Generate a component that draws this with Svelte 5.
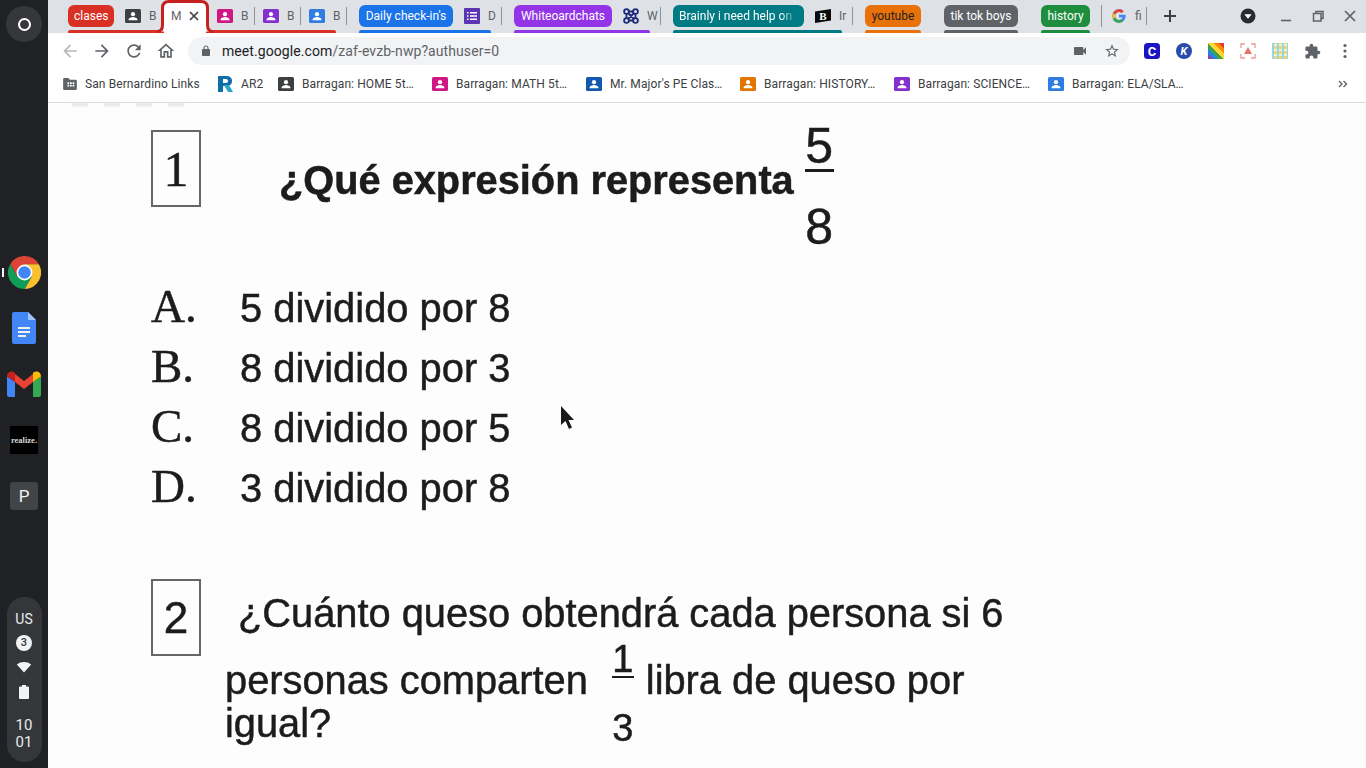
<script>
  const groups = [
    {
      color: '#d93025', label: 'clases', w: 46, end: 11,
      tabs: [
        { icon: '#3c4043', t: 'B', w: 47, pad: 11, plain: true },
        { active: true, t: 'M', w: 48 },
        { icon: '#d01884', t: 'B', w: 46, sep: true },
        { icon: '#8430ce', t: 'B', w: 46, sep: true },
        { icon: '#2f7de1', t: 'B', w: 46, sep: true }
      ]
    },
    { color: '#1a73e8', label: "Daily check-in's", w: 94, end: 11, tabs: [{ kind: 'list', t: 'D', w: 49, pad: 11, sep: true }] },
    { color: '#9334e6', label: 'Whiteoardchats', w: 98, end: 11, tabs: [{ kind: 'knot', t: 'W', w: 49, pad: 11, sep: true }] },
    { color: '#007b83', label: 'Brainly i need help on', w: 131, end: 11, fade: true, tabs: [{ kind: 'flag', t: 'Ir', w: 49, pad: 11, sep: true }] },
    { color: '#e8710a', label: 'youtube', w: 56, dark: true, tabs: [] },
    { color: '#5f6368', label: 'tik tok boys', w: 74, tabs: [] },
    { color: '#1e8e3e', label: 'history', w: 49, tabs: [] }
  ];

  const marks = [
    { color: '#3c4043', label: 'Barragan: HOME 5t…', w: 154 },
    { color: '#d01884', label: 'Barragan: MATH 5t…', w: 154 },
    { color: '#1558b0', label: "Mr. Major's PE Clas…", w: 154 },
    { color: '#e37400', label: 'Barragan: HISTORY…', w: 154 },
    { color: '#8430ce', label: 'Barragan: SCIENCE…', w: 154 },
    { color: '#2f7de1', label: 'Barragan: ELA/SLA…', w: 154 }
  ];

  const options = [
    ['A.', '5 dividido por 8'],
    ['B.', '8 dividido por 3'],
    ['C.', '8 dividido por 5'],
    ['D.', '3 dividido por 8']
  ];
</script>

{#snippet classroom(color)}
  <svg class="tabicon" viewBox="0 0 16 14" width="16" height="14">
    <rect width="16" height="14" rx="1.5" fill={color} />
    <circle cx="8" cy="5.2" r="2.1" fill="#fff" />
    <path d="M3.6 10.6c0-1.8 2.9-2.7 4.4-2.7s4.4.9 4.4 2.7v.6H3.6z" fill="#fff" />
  </svg>
{/snippet}

{#snippet glyph(d, size, fill)}
  <svg viewBox="0 0 24 24" width={size} height={size}><path {d} {fill} /></svg>
{/snippet}

<div class="screen">
  <aside class="shelf">
    <div class="launcher"><span class="ring"></span></div>
    <div class="apps">
      <div class="app">
        <span class="running"></span>
        <svg viewBox="0 0 48 48" width="33" height="33">
          <path d="M24 12H44.8A24 24 0 0 0 3.2 12L13.6 30 24 24Z" fill="#db4437" />
          <path d="M34.4 30 24 48A24 24 0 0 0 44.8 12H24Z" fill="#fbc02d" />
          <path d="M13.6 30 3.2 12A24 24 0 0 0 24 48L34.4 30 24 24Z" fill="#0f9d58" />
          <circle cx="24" cy="24" r="11.5" fill="#fff" />
          <circle cx="24" cy="24" r="9" fill="#4285f4" />
        </svg>
      </div>
      <div class="app">
        <svg viewBox="0 0 24 32" width="24" height="32">
          <path d="M2 0H16L24 8V30a2 2 0 0 1-2 2H2a2 2 0 0 1-2-2V2a2 2 0 0 1 2-2z" fill="#4285f4" />
          <path d="M16 0L24 8H16z" fill="#a1c2fa" />
          <path d="M6 15H18V17H6zM6 19H18V21H6zM6 23H14V25H6z" fill="#f1f1f1" />
        </svg>
      </div>
      <div class="app">
        <svg viewBox="0 0 34 26" width="34" height="26">
          <path d="M0 5.5V24a2 2 0 0 0 2 2H8V11z" fill="#4285f4" />
          <path d="M34 5.5V24a2 2 0 0 1-2 2H26V11z" fill="#34a853" />
          <path d="M8 3 17 10 26 3V11L17 18 8 11z" fill="#ea4335" />
          <path d="M0 5.5C0 1 4.600-1 8 1.700V11z" fill="#c5221f" />
          <path d="M34 5.500C34 1 29.400-1 26 1.700V11z" fill="#fbbc04" />
        </svg>
      </div>
      <div class="app"><span class="realize">realize.</span></div>
      <div class="app"><span class="pee">P</span></div>
    </div>
    <div class="tray">
      <span class="us">US</span>
      <span class="badge">3</span>
      <svg viewBox="0 0 16 14" width="16" height="14"><path d="M8 12.500 0.800 4.500C4.800 1.200 11.200 1.200 15.200 4.500z" fill="#f1f3f4" /></svg>
      <svg class="batt" viewBox="0 0 10 14" width="10" height="14"><path d="M3 0H7V1.500H9a1 1 0 0 1 1 1V13a1 1 0 0 1-1 1H1a1 1 0 0 1-1-1V2.500a1 1 0 0 1 1-1H3z" fill="#f1f3f4" /></svg>
      <span class="clock">10<br />01</span>
    </div>
  </aside>

  <main class="browser">
    <div class="strip">
      {#each groups as g}
        <div class="group">
          <div class="row">
            <span class="chip" class:dark={g.dark} class:fade={g.fade} style="width:{g.w}px;background:{g.color}"><span>{g.label}</span></span>
            {#each g.tabs as tab}
              {#if tab.active}
                <div class="tab active" style="width:{tab.w}px">
                  <svg class="outline" viewBox="0 0 56 33" width="56" height="33">
                    <rect x="7" y="20" width="42" height="13" fill="#fff" />
                    <path d="M0 31.500H0Q5.500 31.500 5.500 25V8Q5.500 1.500 12 1.500H44Q50.500 1.500 50.500 8V25Q50.500 31.500 56 31.500" fill="#fff" stroke="#c5221f" stroke-width="3" />
                  </svg>
                  <span class="letter">{tab.t}</span>
                  <svg class="close" viewBox="0 0 10 10" width="10" height="10"><path d="M1 1 9 9M9 1 1 9" stroke="#3c4043" stroke-width="1.700" /></svg>
                </div>
              {:else}
                <div class="tab" class:sep={tab.sep} style="width:{tab.w}px;padding-left:{tab.pad ?? 8}px">
                  {#if tab.icon}
                    {@render classroom(tab.icon)}
                  {:else if tab.kind === 'list'}
                    <svg class="tabicon" viewBox="0 0 16 16" width="16" height="16">
                      <rect width="16" height="16" rx="1" fill="#5e35b1" />
                      <path d="M3 4H4.500V5.500H3zM6 4H13V5.500H6zM3 7.300H4.500V8.800H3zM6 7.300H13V8.800H6zM3 10.600H4.500V12.100H3zM6 10.600H13V12.100H6z" fill="#fff" />
                    </svg>
                  {:else if tab.kind === 'knot'}
                    <svg class="tabicon" viewBox="0 0 16 16" width="16" height="16" fill="none" stroke="#1c2a7a" stroke-width="1.800">
                      <circle cx="3.500" cy="3.500" r="2.400" />
                      <circle cx="12.500" cy="3.500" r="2.400" />
                      <circle cx="3.500" cy="12.500" r="2.400" />
                      <circle cx="12.500" cy="12.500" r="2.400" />
                      <path d="M5 5 11 11M11 5 5 11M5.800 3.500H10.200M5.800 12.500H10.200M3.500 5.800V10.200M12.500 5.800V10.200" />
                    </svg>
                  {:else}
                    <svg class="tabicon" viewBox="0 0 16 16" width="16" height="16">
                      <path d="M0 3.500 16 1V12.500L0 15z" fill="#0a0a0a" />
                      <text x="8" y="11.800" text-anchor="middle" class="flagb">B</text>
                    </svg>
                  {/if}
                  <span class="letter">{tab.t}</span>
                </div>
              {/if}
            {/each}
          </div>
          <div class="line" style="background:{g.color};margin-right:{g.end ?? 0}px"></div>
        </div>
      {/each}

      <div class="tab sep lone" style="width:46px;padding-left:9px">
        <svg class="tabicon" viewBox="0 0 48 48" width="16" height="16">
          <path d="M43.600 20H24v8.500h11.300C33.700 33.200 29.300 36 24 36c-6.600 0-12-5.400-12-12s5.400-12 12-12c3 0 5.800 1.100 7.900 3l6-6C34.300 5.700 29.400 4 24 4 13 4 4 13 4 24s9 20 20 20 20-9 20-20c0-1.300-.1-2.700-.4-4z" fill="#4285f4" />
          <path d="M6.300 14.700l7 5.100C15.200 15.100 19.300 12 24 12c3 0 5.800 1.100 7.900 3l6-6C34.300 5.700 29.400 4 24 4 16.300 4 9.700 8.300 6.300 14.700z" fill="#ea4335" />
          <path d="M24 44c5.300 0 10.100-1.700 13.700-5l-6.500-5.300C29.200 35.200 26.700 36 24 36c-5.200 0-9.700-3.300-11.300-8l-7 5.400C9.100 39.700 16 44 24 44z" fill="#34a853" />
          <path d="M5.700 33.400l7-5.400c-.4-1.300-.7-2.600-.7-4s.3-2.900.7-4.200l-7-5.100C4.600 17.300 4 20.600 4 24s.6 6.600 1.700 9.400z" fill="#fbbc04" />
        </svg>
        <span class="letter">fi</span>
      </div>

      <button class="plus" aria-label="New tab">
        <svg viewBox="0 0 14 14" width="14" height="14"><path d="M7 1V13M1 7H13" stroke="#3c4043" stroke-width="2" /></svg>
      </button>

      <div class="winctl">
        <svg class="down" viewBox="0 0 16 16" width="16" height="16">
          <circle cx="8" cy="8" r="7.500" fill="#2b2c2f" />
          <path d="M4.300 6.300H11.700L8 10.700z" fill="#fff" />
        </svg>
        <svg viewBox="0 0 32 16" width="32" height="16"><path d="M11 12.500H21" stroke="#5f6368" stroke-width="1.600" /></svg>
        <svg viewBox="0 0 32 16" width="32" height="16" fill="none" stroke="#5f6368" stroke-width="1.500"><path d="M14 5V3.500H21V10.500H19" /><rect x="11.500" y="5.500" width="7.500" height="7.500" /></svg>
        <svg viewBox="0 0 32 16" width="32" height="16"><path d="M11 3 21 13M21 3 11 13" stroke="#5f6368" stroke-width="1.700" /></svg>
      </div>
    </div>

    <div class="toolbar">
      <span class="btn">{@render glyph('M20 11H7.830l5.590-5.590L12 4l-8 8 8 8 1.410-1.410L7.830 13H20v-2z', 20, '#b4b7bb')}</span>
      <span class="btn">{@render glyph('M12 4l-1.410 1.410L16.170 11H4v2h12.170l-5.580 5.590L12 20l8-8z', 20, '#5f6368')}</span>
      <span class="btn">{@render glyph('M17.650 6.350C16.200 4.900 14.210 4 12 4c-4.420 0-7.990 3.580-7.990 8s3.570 8 7.990 8c3.730 0 6.840-2.550 7.730-6h-2.080c-.82 2.330-3.040 4-5.650 4-3.310 0-6-2.690-6-6s2.690-6 6-6c1.660 0 3.140.69 4.220 1.780L13 11h7V4l-2.350 2.350z', 20, '#5f6368')}</span>
      <span class="btn">{@render glyph('M12 5.690l5 4.500V18h-2v-6H9v6H7v-7.810l5-4.500M12 3L2 12h3v8h6v-6h2v6h6v-8h3L12 3z', 20, '#5f6368')}</span>

      <div class="omni">
        <span class="lock">{@render glyph('M18 8h-1V6c0-2.760-2.240-5-5-5S7 3.240 7 6v2H6c-1.100 0-2 .9-2 2v10c0 1.100.9 2 2 2h12c1.100 0 2-.9 2-2V10c0-1.100-.9-2-2-2zM9 6c0-1.660 1.340-3 3-3s3 1.340 3 3v2H9V6z', 12, '#5f6368')}</span>
        <span class="url"><b>meet.google.com</b>/zaf-evzb-nwp?authuser=0</span>
        <span class="btn pushed">{@render glyph('M17 10.500V7c0-.55-.45-1-1-1H4c-.55 0-1 .45-1 1v10c0 .55.45 1 1 1h12c.55 0 1-.45 1-1v-3.500l4 4v-11l-4 4z', 16, '#5f6368')}</span>
        <span class="btn">{@render glyph('M22 9.240l-7.190-.62L12 2 9.190 8.630 2 9.240l5.460 4.730L5.820 21 12 17.270 18.180 21l-1.630-7.030L22 9.240zM12 15.400l-3.760 2.270 1-4.280-3.320-2.880 4.380-.38L12 6.100l1.710 4.040 4.380.38-3.320 2.880 1 4.280L12 15.400z', 16, '#5f6368')}</span>
      </div>

      <span class="btn">
        <svg viewBox="0 0 16 16" width="16" height="16">
          <rect width="16" height="16" rx="3.500" fill="#1c14c4" />
          <text x="8" y="12.500" text-anchor="middle" class="extc">C</text>
        </svg>
      </span>
      <span class="btn">
        <svg viewBox="0 0 16 16" width="16" height="16">
          <circle cx="8" cy="8" r="8" fill="#2c4aa8" />
          <text x="8" y="12" text-anchor="middle" class="extk">K</text>
        </svg>
      </span>
      <span class="btn"><span class="rainbow"></span></span>
      <span class="btn">
        <svg viewBox="0 0 16 16" width="16" height="16" fill="none" stroke="#eb9a92" stroke-width="1.300">
          <path d="M1 5V1H5M11 1H15V5M15 11V15H11M5 15H1V11" />
          <path d="M8 4 12 11H4z" fill="#e57368" stroke="none" />
        </svg>
      </span>
      <span class="btn"><span class="quilt"></span></span>
      <span class="btn">{@render glyph('M20.500 11H19V7c0-1.100-.9-2-2-2h-4V3.500C13 2.120 11.880 1 10.500 1S8 2.120 8 3.500V5H4c-1.100 0-1.990.9-1.990 2v3.800H3.500c1.490 0 2.700 1.210 2.700 2.700s-1.210 2.700-2.700 2.700H2V20c0 1.100.9 2 2 2h3.800v-1.500c0-1.490 1.210-2.700 2.700-2.700 1.490 0 2.700 1.210 2.700 2.700V22H17c1.100 0 2-.9 2-2v-4h1.500c1.380 0 2.500-1.120 2.500-2.500S21.880 11 20.500 11z', 17, '#5f6368')}</span>
      <span class="btn last">
        <svg viewBox="0 0 4 16" width="4" height="16"><circle cx="2" cy="2.500" r="1.600" fill="#5f6368" /><circle cx="2" cy="8" r="1.600" fill="#5f6368" /><circle cx="2" cy="13.500" r="1.600" fill="#5f6368" /></svg>
      </span>
    </div>

    <div class="bookmarks">
      <div class="mark" style="width:154px">
        <svg viewBox="0 0 16 14" width="14" height="12"><path d="M0 1.500A1.500 1.500 0 0 1 1.500 0H6L8 2H14.500A1.500 1.500 0 0 1 16 3.500V12.500A1.500 1.500 0 0 1 14.500 14H1.500A1.500 1.500 0 0 1 0 12.500z" fill="#5f6368" /><path d="M5 5H7V7H5zM8 5H10V7H8zM11 5H13V7H11zM5 8H7V10H5zM8 8H10V10H8zM11 8H13V10H11z" fill="#fff" /></svg>
        <span class="blabel">San Bernardino Links</span>
      </div>
      <div class="mark" style="width:61px">
        <svg viewBox="0 0 16 16" width="16" height="16">
          <path d="M1 0H9C13 0 15 2 15 5S13 10 9 10H6V16H1z" fill="#0f6ea8" />
          <path d="M6 3H9C10.500 3 11 4 11 5S10.500 7 9 7H6z" fill="#fff" />
          <path d="M7 9H12L16 16H11z" fill="#2aa7c9" />
        </svg>
        <span class="blabel">AR2</span>
      </div>
      {#each marks as m}
        <div class="mark" style="width:{m.w}px">
          {@render classroom(m.color)}
          <span class="blabel">{m.label}</span>
        </div>
      {/each}
      <svg class="more" viewBox="0 0 10 8" width="10" height="8"><path d="M1 1 4 4 1 7M5.500 1 8.500 4 5.500 7" fill="none" stroke="#5f6368" stroke-width="1.400" /></svg>
    </div>

    <div class="page">
      <div class="smudges"><i></i><i></i><i></i><i></i></div>
      <div class="sheet">
        <div class="q1">
          <div class="box serif">1</div>
          <p class="title">¿Qué expresión representa</p>
          <div class="frac big">
            <span class="num">5</span>
            <span class="den">8</span>
          </div>
        </div>

        <ul class="options">
          {#each options as [letter, text]}
            <li><span class="opt">{letter}</span><span class="txt">{text}</span></li>
          {/each}
        </ul>

        <div class="q2">
          <div class="box sans">2</div>
          <div class="body">
            <p class="first">¿Cuánto queso obtendrá cada persona si 6</p>
            <div class="rest">
              <div class="stack">
                <p>personas comparten</p>
                <p class="igual">igual?</p>
              </div>
              <div class="frac small">
                <span class="num">1</span>
                <span class="den">3</span>
              </div>
              <p class="tail">libra de queso por</p>
            </div>
          </div>
        </div>
      </div>

      <svg class="cursor" viewBox="0 0 16 26" width="16" height="26">
        <path d="M1 0V19L5.500 15 9 23 12 21.500 8.500 14H14z" fill="#1a1a1a" />
      </svg>
    </div>
  </main>
</div>

<style>
  :global(body) {
    margin: 0;
    overflow: hidden;
  }

  .screen {
    display: flex;
    width: 1366px;
    height: 768px;
    overflow: hidden;
    font-family: Roboto, 'Liberation Sans', sans-serif;
  }

  /* os shelf */
  .shelf {
    width: 48px;
    flex: none;
    background: #202124;
    display: flex;
    flex-direction: column;
    align-items: center;
  }

  .launcher {
    width: 36px;
    height: 36px;
    margin-top: 6px;
    border-radius: 50%;
    background: #36373a;
    display: flex;
    align-items: center;
    justify-content: center;
  }

  .ring {
    width: 9px;
    height: 9px;
    border: 2.5px solid #fff;
    border-radius: 50%;
  }

  .apps {
    margin-top: 202px;
    width: 100%;
  }

  .app {
    position: relative;
    height: 56px;
    display: flex;
    align-items: center;
    justify-content: center;
  }

  .running {
    position: absolute;
    left: 2px;
    top: 24px;
    width: 2px;
    height: 9px;
    background: #f1f3f4;
  }

  .realize {
    width: 28px;
    height: 28px;
    background: #000;
    color: #d8d8d8;
    font: bold 8.500px 'Liberation Serif', serif;
    display: flex;
    align-items: center;
    justify-content: center;
  }

  .pee {
    width: 28px;
    height: 28px;
    border-radius: 3px;
    background: #434446;
    color: #f1f3f4;
    font-size: 17px;
    display: flex;
    align-items: center;
    justify-content: center;
  }

  .tray {
    margin-top: auto;
    margin-bottom: 6px;
    width: 35px;
    height: 165px;
    border-radius: 17px;
    background: #35363a;
    color: #e8eaed;
    font-size: 14px;
    display: flex;
    flex-direction: column;
    align-items: center;
  }

  .us {
    margin-top: 14px;
    line-height: 16px;
  }

  .badge {
    width: 16px;
    height: 16px;
    margin-top: 8px;
    border-radius: 50%;
    background: #f1f3f4;
    color: #35363a;
    font-size: 11px;
    font-weight: 500;
    line-height: 16px;
    text-align: center;
  }

  .tray svg {
    margin-top: 9px;
    display: block;
  }

  .tray .batt {
    margin-top: 11px;
  }

  .clock {
    margin-top: 18px;
    font-size: 15px;
    line-height: 17px;
    text-align: center;
  }

  /* browser chrome */
  .browser {
    flex: 1;
    min-width: 0;
    display: flex;
    flex-direction: column;
    background: #fff;
  }

  .strip {
    height: 33px;
    flex: none;
    box-sizing: border-box;
    padding-left: 20px;
    background: #dee1e6;
    display: flex;
    gap: 12px;
  }

  .group {
    position: relative;
    padding-top: 5px;
    display: flex;
    flex-direction: column;
  }

  .group:nth-child(5),
  .group:nth-child(6) {
    margin-right: 11px;
  }

  .row {
    display: flex;
    height: 22px;
  }

  .line {
    height: 3px;
    margin-top: 3px;
    border-radius: 2px 2px 0 0;
  }

  .chip {
    box-sizing: border-box;
    flex: none;
    height: 22px;
    padding: 0 6px;
    border-radius: 6px;
    color: #fff;
    font-size: 12px;
    line-height: 22px;
    white-space: nowrap;
    overflow: hidden;
    text-align: center;
  }

  .chip.dark {
    color: #202124;
  }

  .chip.fade span {
    display: block;
    overflow: hidden;
    text-align: left;
    -webkit-mask-image: linear-gradient(90deg, #000 85%, transparent);
    mask-image: linear-gradient(90deg, #000 85%, transparent);
  }

  .tab {
    position: relative;
    box-sizing: border-box;
    flex: none;
    height: 22px;
    display: flex;
    align-items: center;
    gap: 8px;
    color: #5f6368;
    font-size: 12px;
  }

  .tabicon {
    flex: none;
  }

  .tab.sep::after {
    content: '';
    position: absolute;
    right: 0;
    top: 2px;
    width: 1px;
    height: 18px;
    background: #8f9398;
  }

  .tab.lone {
    height: 22px;
    margin: 5px 0 0 -1px;
    border-left: 1px solid #8f9398;
  }

  .tab.active {
    padding-left: 10px;
    gap: 0;
    z-index: 2;
  }

  .outline {
    position: absolute;
    left: -4px;
    top: -5px;
  }

  .tab.active .letter {
    position: relative;
  }

  .close {
    position: relative;
    margin-left: 8px;
  }

  .flagb {
    font: 900 11px 'Liberation Serif', serif;
    fill: #fff;
  }

  .plus {
    width: 28px;
    height: 28px;
    margin: 2px 0 0 -3px;
    padding: 0;
    border: 0;
    background: none;
    display: flex;
    align-items: center;
    justify-content: center;
  }

  .winctl {
    margin-left: auto;
    padding: 8px 0 0;
    display: flex;
  }

  .winctl svg {
    display: block;
  }

  .winctl .down {
    margin-right: 14px;
  }

  .toolbar {
    height: 34px;
    flex: none;
    box-sizing: border-box;
    padding: 2px 5px 0 6px;
    display: flex;
    align-items: center;
  }

  .btn {
    width: 32px;
    height: 32px;
    flex: none;
    display: flex;
    align-items: center;
    justify-content: center;
  }

  .btn.last {
    width: 33px;
  }

  .omni {
    flex: 1;
    height: 28px;
    margin: 0 6px;
    padding: 0 2px 0 12px;
    border-radius: 14px;
    background: #f1f3f4;
    display: flex;
    align-items: center;
  }

  .lock {
    width: 12px;
    height: 12px;
    margin-right: 10px;
  }

  .lock svg {
    display: block;
  }

  .url {
    flex: 1;
    color: #5f6368;
    font-size: 14px;
    letter-spacing: 0.08px;
  }

  .url b {
    color: #202124;
    font-weight: 400;
  }

  .extc {
    font: bold 13px Roboto, sans-serif;
    fill: #fff;
  }

  .extk {
    font: italic bold 11px Roboto, sans-serif;
    fill: #fff;
  }

  .rainbow {
    width: 16px;
    height: 16px;
    background: linear-gradient(45deg, #8e44ad 0 18%, #1e88e5 18% 34%, #43a047 34% 50%, #fdd835 50% 66%, #fb8c00 66% 82%, #e53935 82%);
  }

  .quilt {
    width: 16px;
    height: 16px;
    background:
      repeating-linear-gradient(90deg, #8fd9e0 0 2px, transparent 2px 5px),
      repeating-linear-gradient(0deg, #f3d27a 0 3px, #eef3d8 3px 5px);
  }

  .bookmarks {
    height: 36px;
    flex: none;
    box-sizing: border-box;
    padding: 0 0 2px 15px;
    border-bottom: 1px solid #dadce0;
    display: flex;
    align-items: center;
    color: #3c4043;
    font-size: 12px;
    letter-spacing: 0.1px;
  }

  .mark {
    flex: none;
    display: flex;
    align-items: center;
    gap: 8px;
    white-space: nowrap;
  }

  .mark svg {
    flex: none;
  }

  .more {
    margin-left: auto;
    margin-right: 18px;
  }

  /* worksheet shown in the meet tab */
  .page {
    position: relative;
    flex: 1;
    min-height: 0;
    overflow: hidden;
    background: #fdfdfd;
  }

  .smudges {
    position: absolute;
    left: 24px;
    top: 0;
    display: flex;
    gap: 16px;
  }

  .smudges i {
    width: 16px;
    height: 3px;
    background: #e4e4e4;
    filter: blur(1px);
  }

  .sheet {
    padding: 27px 0 0 103px;
    color: #1c1c1c;
    font-family: 'Liberation Sans', Arial, sans-serif;
    -webkit-text-stroke: 0.5px #1c1c1c;
    filter: blur(0.6px);
  }

  p {
    margin: 0;
  }

  .box {
    box-sizing: border-box;
    width: 50px;
    height: 77px;
    flex: none;
    border: 2px solid #666;
    display: flex;
    align-items: center;
    justify-content: center;
    font-size: 50px;
  }

  .box.serif {
    font-family: 'Liberation Serif', serif;
  }

  .box.sans {
    font-size: 44px;
  }

  .q1 {
    display: flex;
    height: 117px;
  }

  .title {
    margin: 26px 0 0 78px;
    font-size: 39.750px;
    font-weight: 700;
    line-height: 48px;
    white-space: nowrap;
  }

  .frac {
    display: flex;
    flex-direction: column;
    align-items: center;
  }

  .frac.big {
    width: 29px;
    margin: -7px 0 0 11px;
    font-size: 50px;
    line-height: 46px;
  }

  .frac.big .num {
    border-bottom: 3px solid #1c1c1c;
    width: 100%;
    text-align: center;
  }

  .frac.big .den {
    margin-top: 32px;
  }

  .options {
    list-style: none;
    margin: 32px 0 0;
    padding: 0;
  }

  .options li {
    height: 60px;
    display: flex;
    align-items: baseline;
  }

  .opt {
    width: 89px;
    font: 47px 'Liberation Serif', serif;
  }

  .txt {
    font-size: 39.900px;
    white-space: nowrap;
  }

  .q2 {
    margin-top: 60px;
    display: grid;
    grid-template-columns: 50px 1fr;
    column-gap: 24px;
    font-size: 39.800px;
    white-space: nowrap;
  }

  .first {
    padding: 12px 0 0 13px;
    line-height: 44px;
  }

  .rest {
    display: flex;
    margin-top: 24px;
  }

  .stack p {
    line-height: 43px;
  }

  .frac.small {
    width: 22px;
    margin: -17px 12px 0 24px;
    font-size: 38px;
    line-height: 40px;
  }

  .frac.small .num {
    width: 100%;
    line-height: 34px;
    text-align: center;
    border-bottom: 2px solid #1c1c1c;
  }

  .frac.small .den {
    margin-top: 30px;
  }

  .tail {
    line-height: 43px;
  }

  .cursor {
    position: absolute;
    left: 512px;
    top: 303px;
  }
</style>
